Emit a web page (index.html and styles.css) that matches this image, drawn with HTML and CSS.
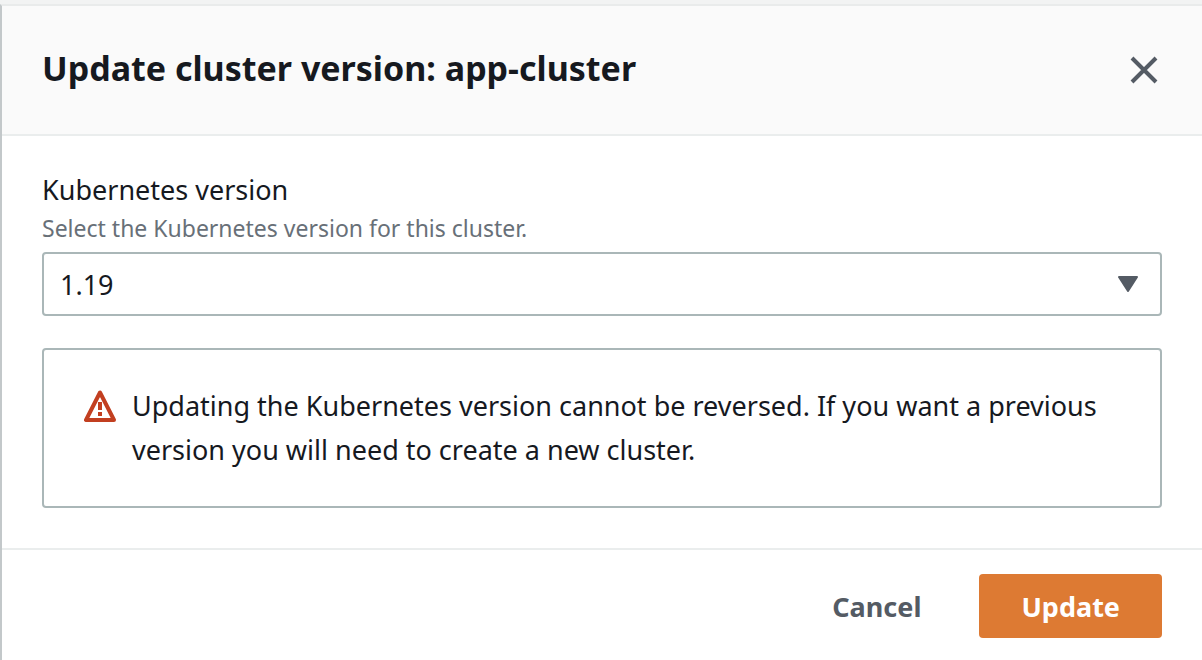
FILE: index.html
```html
<!DOCTYPE html>
<html lang="en">
<head>
<meta charset="utf-8">
<meta name="viewport" content="width=device-width, initial-scale=1">
<title>Update cluster version</title>
<link rel="stylesheet" href="styles.css">
</head>
<body>
<div class="modal" role="dialog" aria-labelledby="title">
  <header class="modal-header">
    <h1 class="title" id="title">Update cluster version: app-cluster</h1>
    <button class="close" type="button" aria-label="Close">
      <svg width="28" height="28" viewBox="0 0 28 28" fill="none" stroke="#545b64" stroke-width="4"><path d="M2 2l24 24M26 2L2 26"/></svg>
    </button>
  </header>
  <main class="modal-body">
    <div class="field">
      <label class="label" for="version">Kubernetes version</label>
      <p class="hint" id="hint">Select the Kubernetes version for this cluster.</p>
      <div class="select-wrap">
        <select class="select" id="version" aria-describedby="hint"><option>1.19</option></select>
        <svg class="caret" width="20" height="16" viewBox="0 0 20 16" fill="#545b64" stroke="#545b64" stroke-width="2" stroke-linejoin="round"><path d="M1 1h18l-9 14z"/></svg>
      </div>
    </div>
    <div class="alert" role="alert">
      <svg class="alert-icon" width="32" height="32" viewBox="0 0 32 32" fill="none" stroke="#c23f20" stroke-width="4" stroke-linejoin="round"><path d="M16 2.500L2 30h28z"/><path d="M16 12v8M16 22v4"/></svg>
      <p class="alert-text">Updating the Kubernetes version cannot be reversed. If you want a previous version you will need to create a new cluster.</p>
    </div>
  </main>
  <footer class="modal-footer">
    <button class="button" type="button">Cancel</button>
    <button class="button primary" type="button">Update</button>
  </footer>
</div>
</body>
</html>
```
FILE: styles.css
```css
* {
  box-sizing: border-box;
}

body {
  margin: 0;
  padding-top: 4px;
  background: #f2f3f3;
  color: #16191f;
  font-family: "Noto Sans", "Open Sans", sans-serif;
  font-size: 27px;
}

.modal {
  display: flex;
  flex-direction: column;
  min-height: calc(100vh - 4px);
  border-top: 2px solid #e9ebeb;
  border-left: 2px solid #c3c8ca;
  background: #fff;
}

.modal-header {
  display: flex;
  align-items: center;
  justify-content: space-between;
  padding: 40px;
  border-bottom: 2px solid #eaeded;
  background: #fafafa;
}

.title {
  margin: 0;
  padding-bottom: 4px;
  font-size: 34px;
  line-height: 44px;
  font-weight: 700;
}

.close {
  display: flex;
  padding: 4px;
  border: 0;
  background: none;
}

.modal-body {
  display: flex;
  flex-direction: column;
  gap: 32px;
  padding: 32px 40px 40px;
}

.field {
  display: flex;
  flex-direction: column;
}

.label {
  line-height: 44px;
}

.hint {
  margin: 0 0 8px;
  color: #687078;
  font-size: 23px;
  line-height: 32px;
}

.select-wrap {
  display: grid;
  position: relative;
}

.select {
  height: 64px;
  padding: 0 60px 0 16px;
  border: 2px solid #aab7b8;
  border-radius: 4px;
  background: #fff;
  color: #16191f;
  font: inherit;
  appearance: none;
}

.caret {
  position: absolute;
  top: 24px;
  right: 24px;
  pointer-events: none;
}

.alert {
  display: flex;
  gap: 16px;
  padding: 34px 40px;
  border: 2px solid #aab7b8;
  border-radius: 4px;
}

.alert-icon {
  flex: none;
  margin-top: 6px;
}

.alert-text {
  margin: 0;
  line-height: 44px;
}

.modal-footer {
  display: flex;
  justify-content: flex-end;
  gap: 16px;
  padding: 24px 40px;
  border-top: 2px solid #eaeded;
}

.button {
  height: 64px;
  padding: 0 42px;
  border: 0;
  border-radius: 4px;
  background: none;
  color: #545b64;
  font: inherit;
  font-weight: 700;
}

.primary {
  background: #dd7a33;
  color: #fff;
}
```
